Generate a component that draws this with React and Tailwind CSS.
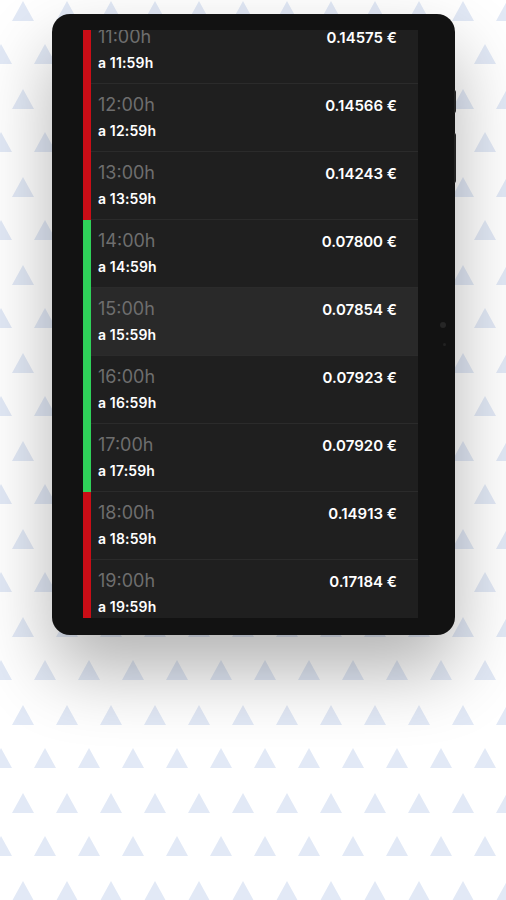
import React from "react";

const rows = [
  { h: "11", p: "0.14575", c: "red" },
  { h: "12", p: "0.14566", c: "red" },
  { h: "13", p: "0.14243", c: "red" },
  { h: "14", p: "0.07800", c: "green" },
  { h: "15", p: "0.07854", c: "green", active: true },
  { h: "16", p: "0.07923", c: "green" },
  { h: "17", p: "0.07920", c: "green" },
  { h: "18", p: "0.14913", c: "red" },
  { h: "19", p: "0.17184", c: "red" },
];

function Pattern() {
  return (
    <svg className="absolute inset-0" width="506" height="900" aria-hidden="true">
      <defs>
        <pattern id="tri" width="44" height="88" patternUnits="userSpaceOnUse" x="0" y="0">
          <polygon points="23,1 34,21 12,21" fill="#e2e9f6" />
          <polygon points="1,44 12,64 -10,64" fill="#e2e9f6" />
          <polygon points="45,44 56,64 34,64" fill="#e2e9f6" />
        </pattern>
      </defs>
      <rect width="506" height="900" fill="url(#tri)" />
    </svg>
  );
}

function Row({ h, p, c, active }) {
  return (
    <div className="flex h-[68px] shrink-0">
      <div className={c === "red" ? "w-[8px] bg-[#c90d16]" : "w-[8px] bg-[#2fd159]"} />
      <div
        className={
          "flex flex-1 justify-between border-b border-[#2b2b2b] pl-[7px] pr-[21px] " +
          (active ? "bg-[#292929]" : "")
        }
      >
        <div className="flex flex-col pt-[9px]">
          <span className="text-[18px] leading-[24px] font-normal text-[#6e6e6e]">{h}:00h</span>
          <span className="mt-[4px] text-[14px] leading-[20px] font-semibold tracking-[0.01em] text-white">a {h}:59h</span>
        </div>
        <div className="pt-[9px]">
          <span className="text-[15px] leading-[20px] font-semibold text-white">{p} €</span>
        </div>
      </div>
    </div>
  );
}

export default function App() {
  return (
    <div
      className="relative h-[900px] w-[506px] overflow-hidden bg-white"
      style={{ fontFamily: "Inter, 'Noto Sans', sans-serif" }}
    >
      <Pattern />
      <div className="relative ml-[52px] mt-[14px] flex h-[621px] w-[403px] rounded-[18px] bg-[#121212] pb-[17px] pl-[31px] pr-[37px] pt-[16px] shadow-[0_36px_72px_rgba(0,0,0,0.3)]">
        <div className="flex flex-1 flex-col overflow-hidden bg-[#1f1f1f]">
          <div className="-mt-[14px] flex flex-col">
            {rows.map((r) => (
              <Row key={r.h} {...r} />
            ))}
          </div>
        </div>
        <div className="absolute right-[9px] top-[308px] h-[6px] w-[6px] rounded-full bg-[#262626]" />
        <div className="absolute right-[9px] top-[329px] h-[3px] w-[3px] rounded-full bg-[#222]" />
        <div className="absolute -right-[1px] top-[76px] h-[23px] w-[2px] rounded-r bg-[#222]" />
        <div className="absolute -right-[1px] top-[119px] h-[50px] w-[2px] rounded-r bg-[#222]" />
      </div>
    </div>
  );
}
